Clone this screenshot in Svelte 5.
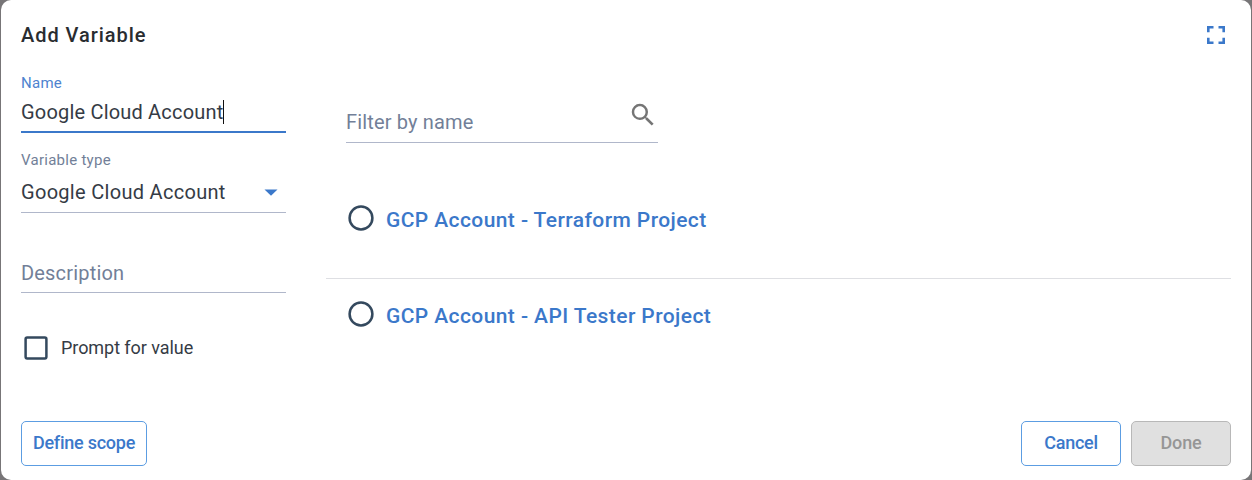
<script>
  let name = $state('Google Cloud Account');
  const accounts = ['GCP Account - Terraform Project', 'GCP Account - API Tester Project'];
</script>

<main class="backdrop">
  <section class="dialog" role="dialog" aria-labelledby="title">
    <header>
      <h1 id="title"><span>Add Variable</span></h1>
      <svg class="expand" width="18" height="18" viewBox="0 0 18 18" fill="none" stroke="#3b78ca" stroke-width="2.6">
        <path d="M1.3 6.2V1.3H6.5M11.5 1.3H16.7V6.2M16.7 11.8V16.7H11.5M6.5 16.7H1.3V11.8" />
      </svg>
    </header>

    <div class="content">
      <div class="form">
        <div class="field name">
          <div class="label"><span>Name</span></div>
          <div class="value"><span>{name}</span><i class="caret"></i></div>
        </div>
        <div class="field type">
          <div class="label"><span>Variable type</span></div>
          <div class="value">
            <span>Google Cloud Account</span>
            <svg width="14" height="7" viewBox="0 0 14 7"><path d="M0.5 0.5h13L7 6.7z" fill="#3b78ca" /></svg>
          </div>
        </div>
        <div class="field description"><span>Description</span></div>
        <div class="prompt">
          <svg width="24" height="24" viewBox="0 0 24 24" fill="none" stroke="#34495e" stroke-width="2.5">
            <rect x="1.6" y="1.6" width="20.8" height="20.8" rx="1.6" />
          </svg>
          <span>Prompt for value</span>
        </div>
      </div>

      <div class="picker">
        <div class="filter">
          <span>Filter by name</span>
          <svg width="30" height="30" viewBox="0 0 24 24" fill="#757575">
            <path d="M15.5 14h-.79l-.28-.27A6.471 6.471 0 0 0 16 9.5 6.5 6.5 0 1 0 9.5 16c1.61 0 3.09-.59 4.23-1.57l.27.28v.79l5 4.99L20.49 19l-4.99-5zm-6 0C7.01 14 5 11.99 5 9.5S7.01 5 9.5 5 14 7.01 14 9.5 11.99 14 9.5 14z" />
          </svg>
        </div>
        <ul>
          {#each accounts as account}
            <li>
              <svg width="26" height="26" viewBox="0 0 26 26" fill="none" stroke="#34495e" stroke-width="2.5">
                <circle cx="13" cy="13" r="11.4" />
              </svg>
              <span>{account}</span>
            </li>
          {/each}
        </ul>
      </div>
    </div>

    <footer>
      <button class="scope"><span>Define scope</span></button>
      <button class="cancel"><span>Cancel</span></button>
      <button class="done" disabled><span>Done</span></button>
    </footer>
  </section>
</main>

<style>
  * { box-sizing: border-box; }
  .backdrop {
    height: 480px;
    padding: 0 1px;
    background: #777577;
    font-family: Roboto, "Liberation Sans", sans-serif;
    color: #353b45;
  }
  .dialog {
    height: 480px;
    padding: 0 20px;
    background: #fff;
    border-radius: 10px;
    display: flex;
    flex-direction: column;
    overflow: hidden;
  }
  header {
    height: 70px;
    display: flex;
    align-items: center;
    justify-content: space-between;
    padding-right: 6px;
  }
  h1 {
    margin: 0;
    font-size: 20px;
    line-height: 24px;
    font-weight: 500;
    letter-spacing: 0.95px;
    color: #292c30;
  }
  .content { height: 351px; display: flex; gap: 40px; }
  .form { width: 265px; }
  .field { border-bottom: 1px solid #b0b7ca; }
  .label {
    font-size: 15px;
    line-height: 18px;
    letter-spacing: 0.27px;
    color: #727f98;
  }
  .value {
    display: flex;
    align-items: center;
    font-size: 20px;
    line-height: 24px;
    letter-spacing: 0.3px;
  }
  .name { height: 63px; padding-top: 4px; border-bottom: 2px solid #3b78ca; }
  .name .label { color: #4e83cf; }
  .name .value { margin-top: 8px; letter-spacing: 0.19px; }
  .caret { width: 1px; height: 24px; background: #111; }
  .type { height: 80px; padding-top: 18px; }
  .type .value { margin-top: 11px; justify-content: space-between; padding-right: 8px; }
  .description {
    height: 80px;
    padding-top: 48px;
    font-size: 20px;
    line-height: 24px;
    letter-spacing: 0.18px;
    color: #727f98;
  }
  .prompt {
    display: flex;
    align-items: center;
    gap: 13px;
    height: 24px;
    margin: 43px 0 0 3px;
    font-size: 18px;
    letter-spacing: -0.06px;
  }
  .prompt span { line-height: 22px; }
  .picker { flex: 1; }
  .filter {
    width: 312px;
    height: 73px;
    margin-left: 20px;
    padding: 30px 0 0;
    display: flex;
    justify-content: space-between;
    align-items: flex-start;
    border-bottom: 1px solid #b0b7ca;
    font-size: 20px;
    letter-spacing: 0.16px;
    color: #727f98;
  }
  .filter span { line-height: 24px; margin-top: 10px; }
  ul { list-style: none; margin: 27px 0 0; padding: 0; }
  li {
    height: 109px;
    display: flex;
    align-items: flex-start;
    gap: 12px;
    padding: 35px 0 0 22px;
    border-bottom: 1px solid #dedfe3;
    color: #3b78ca;
    font-size: 21px;
    font-weight: 500;
    letter-spacing: 0.41px;
  }
  li:last-child { height: 80px; padding-top: 22px; border: 0; }
  li span { line-height: 26px; margin-top: 2px; }
  footer { display: flex; gap: 10px; }
  button {
    height: 45px;
    width: 100px;
    padding: 0 0 2px;
    border: 1px solid #5c9de2;
    border-radius: 5px;
    background: #fff;
    color: #3b78ca;
    font: 500 18px/41px Roboto, "Liberation Sans", sans-serif;
    letter-spacing: -0.24px;
  }
  .scope { width: 126px; margin-right: auto; }
  .done { background: #e0e0e0; border-color: #b8b8b8; color: #969696; letter-spacing: -0.1px; }
</style>
